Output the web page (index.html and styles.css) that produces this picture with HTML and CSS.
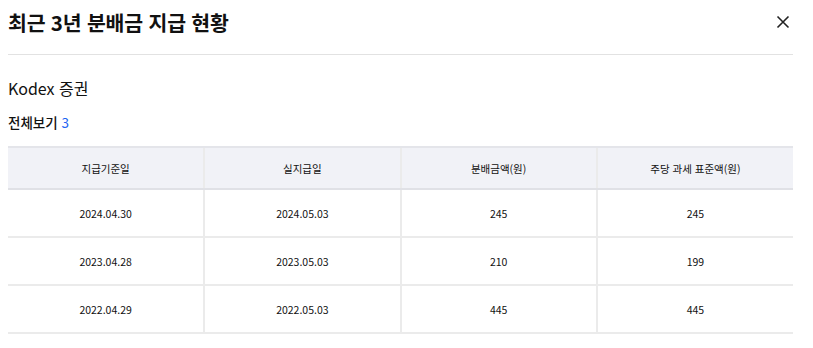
FILE: index.html
```html
<!DOCTYPE html>
<html lang="ko">
<head>
<meta charset="utf-8">
<link rel="stylesheet" href="styles.css">
</head>
<body>
<div class="modal">
  <div class="modal-head">
    <h1 class="title">최근 3년 분배금 지급 현황</h1>
    <button class="close" aria-label="닫기">
      <svg width="14" height="14" viewBox="0 0 14 14"><path d="M1.5 1.5L12.5 12.5M12.5 1.5L1.5 12.5" stroke="#222" stroke-width="1.6" fill="none"/></svg>
    </button>
  </div>
  <h2 class="sub">Kodex 증권</h2>
  <p class="count">전체보기 <span class="num">3</span></p>
  <table class="grid">
    <thead>
      <tr><th>지급기준일</th><th>실지급일</th><th>분배금액(원)</th><th>주당 과세 표준액(원)</th></tr>
    </thead>
    <tbody>
      <tr><td>2024.04.30</td><td>2024.05.03</td><td>245</td><td>245</td></tr>
      <tr><td>2023.04.28</td><td>2023.05.03</td><td>210</td><td>199</td></tr>
      <tr><td>2022.04.29</td><td>2022.05.03</td><td>445</td><td>445</td></tr>
    </tbody>
  </table>
</div>
</body>
</html>
```

FILE: styles.css
```css
html, body { margin: 0; padding: 0; background: #fff; }
body { font-family: "Noto Sans CJK KR", "Noto Sans", sans-serif; color: #111; }
.modal { width: 785px; padding: 0 0 0 8px; }
.modal-head { height: 55px; border-bottom: 1px solid #e2e2e2; display: flex; align-items: center; justify-content: space-between; box-sizing: border-box; }
.title { margin: 0; font-size: 20.5px; font-weight: 700; letter-spacing: -0.2px; line-height: 1; padding-bottom: 10px; }
.close { background: none; border: 0; padding: 0; margin: 0 3px 10px 0; width: 14px; height: 14px; display: flex; }
.sub { margin: 23px 0 0; font-size: 16px; font-weight: 400; line-height: 20px; }
.count { margin: 14px 0 0; font-size: 13.5px; font-weight: 500; line-height: 20px; }
.num { color: #1c64f2; font-weight: 400; }
.grid { margin-top: 14px; width: 785px; border-collapse: collapse; table-layout: fixed; font-size: 10.5px; }
.grid th, .grid td { text-align: center; border: 2px solid #ebebeb; border-left: 0; border-right: 0; }
.grid th + th, .grid td + td { border-left: 2px solid #ebebeb; }
.grid th { background: #f1f2f7; height: 38px; font-weight: 400; border-top-color: #e4e5ea; border-bottom-color: #e0e1e6; border-left-color: #e4e5ea; }
.grid td { height: 44px; }
```
